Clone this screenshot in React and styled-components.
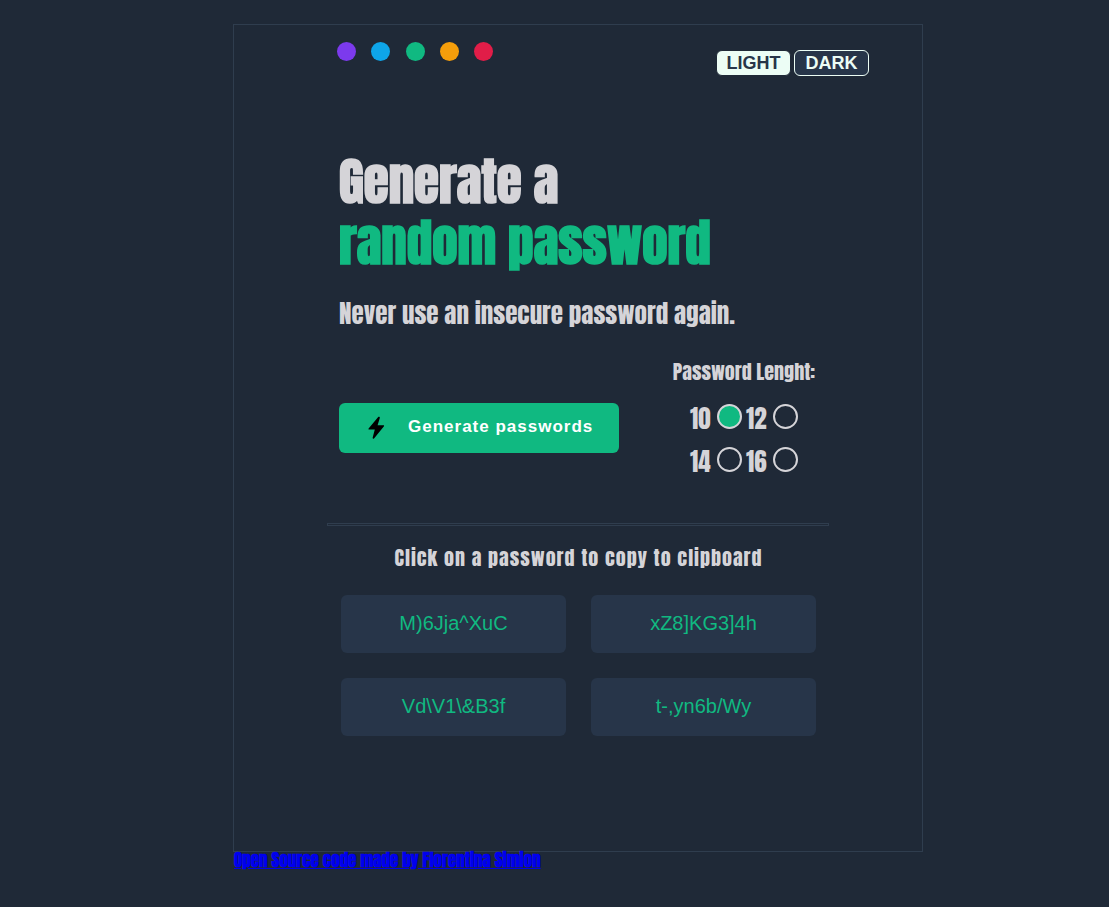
import React, { useState } from "react";
import styled, { createGlobalStyle } from "styled-components";

const display = `Anton, Impact, "Liberation Sans", sans-serif`;
const body = `"Liberation Sans", Arial, sans-serif`;

const GlobalStyle = createGlobalStyle`
  * { box-sizing: border-box; }
  body {
    margin: 0;
    background: #1f2937;
    color: #d5d4d8;
    font-family: ${display};
  }
`;

const Page = styled.div`
  padding: 24px 186px 36px 233px;
`;

const Card = styled.main`
  min-height: 828px;
  padding: 0 93px;
  border: 1px solid #2f3d4e;
`;

const TopBar = styled.header`
  display: flex;
  justify-content: space-between;
  align-items: flex-start;
  margin-right: -40px;
  padding: 17px 0 0 10px;
`;

const Swatches = styled.div`
  display: flex;
  justify-content: space-between;
  width: 156px;
`;

const Swatch = styled.button`
  width: 19px;
  height: 19px;
  padding: 0;
  border: 0;
  border-radius: 50%;
  background: ${(p) => p.$color};
`;

const Modes = styled.div`
  display: flex;
  gap: 3px;
  padding-top: 8px;
`;

const ModeButton = styled.button`
  width: 75px;
  height: 26px;
  padding: 0;
  border: 1px solid ${(p) => (p.$light ? "#1f2937" : "#ecfdf5")};
  border-radius: 6px;
  background: ${(p) => (p.$light ? "#ecfdf5" : "#273549")};
  color: ${(p) => (p.$light ? "#273549" : "#ecfdf5")};
  font: 700 18px/24px ${body};
`;

const Intro = styled.section`
  padding: 75px 12px 0;
`;

const Title = styled.h1`
  margin: 0;
  font-size: 51px;
  font-weight: 700;
  line-height: 61px;
  white-space: nowrap;
`;

const Accent = styled.span`
  display: block;
  color: #10b981;
`;

const Tagline = styled.p`
  margin: 25px 0 0;
  font-size: 25px;
  font-weight: 400;
  line-height: 32px;
  white-space: nowrap;
`;

const Controls = styled.section`
  display: flex;
  justify-content: space-between;
  align-items: flex-start;
  padding: 29px 12px 0;
`;

const GenerateButton = styled.button`
  display: flex;
  align-items: center;
  gap: 20px;
  width: 280px;
  height: 50px;
  margin-top: 44px;
  padding: 0 25px;
  border: 0;
  border-radius: 6px;
  background: #10b981;
  color: #fff;
  font: 700 17px/20px ${body};
  letter-spacing: 1px;
  white-space: nowrap;

  span { padding-bottom: 2px; }
`;

const LengthGroup = styled.fieldset`
  width: 146px;
  margin: 0;
  padding: 0;
  border: 0;
`;

const Legend = styled.legend`
  width: 100%;
  padding: 0;
  font-size: 20px;
  font-weight: 400;
  line-height: 26px;
  text-align: center;
  white-space: nowrap;
`;

const Options = styled.div`
  display: grid;
  grid-template-columns: repeat(2, 52px);
  justify-content: center;
  gap: 15px 4px;
  padding-top: 19px;
`;

const Option = styled.label`
  display: flex;
  justify-content: space-between;
  align-items: center;
  height: 28px;
  font-size: 25px;
  font-weight: 400;
`;

const Radio = styled.input`
  flex: none;
  appearance: none;
  width: 25px;
  height: 25px;
  margin: 0 0 3px;
  border: 2px solid #d5d4d8;
  border-radius: 50%;

  &:checked { background: #10b981; }
`;

const Divider = styled.hr`
  height: 3px;
  margin: 48px 0 0;
  border: 1px solid #2f3d4e;
`;

const Results = styled.section`
  padding: 19px 13px 0 14px;
`;

const Hint = styled.h2`
  margin: 0 0 24px;
  font-size: 20px;
  font-weight: 400;
  line-height: 26px;
  letter-spacing: 1px;
  text-align: center;
  white-space: nowrap;
`;

const PasswordGrid = styled.div`
  display: grid;
  grid-template-columns: 1fr 1fr;
  gap: 25px;
`;

const Password = styled.button`
  height: 58px;
  padding: 0 0 2px;
  border: 0;
  border-radius: 6px;
  background: #273549;
  color: #10b981;
  font: 400 20px/24px ${body};
`;

const Credit = styled.a`
  display: block;
  width: fit-content;
  padding-left: 1px;
  color: #0000ee;
  font-size: 17px;
  font-weight: 700;
  line-height: 16px;
`;

const colors = [
  ["Violet", "#7c3aed"],
  ["Blue", "#0ea5e9"],
  ["Green", "#10b981"],
  ["Orange", "#f59e0b"],
  ["Red", "#e11d48"],
];
const passwords = ["M)6Jja^XuC", "xZ8]KG3]4h", "Vd\\V1\\&B3f", "t-,yn6b/Wy"];

function Bolt() {
  return (
    <svg width="24" height="24" viewBox="0 0 24 24" aria-hidden="true">
      <path
        d="M14.2 1.1 4.8 12.2c-.6.7-.4 1.3.4 1.3h5.6L8.7 21.6c-.3 1.1.6 1.5 1.3.8l9.8-12c.5-.7.3-1.2-.5-1.2h-5.7l2.2-7.2c.3-1.1-.9-1.7-1.6-.9z"
        fill="#000"
      />
    </svg>
  );
}

export default function App() {
  const [length, setLength] = useState(10);
  return (
    <>
      <GlobalStyle />
      <Page>
        <Card>
          <TopBar>
            <Swatches>
              {colors.map(([name, color]) => (
                <Swatch key={name} type="button" aria-label={name} $color={color} />
              ))}
            </Swatches>
            <Modes>
              <ModeButton type="button" $light>LIGHT</ModeButton>
              <ModeButton type="button">DARK</ModeButton>
            </Modes>
          </TopBar>
          <Intro>
            <Title>
              Generate a <Accent>random password</Accent>
            </Title>
            <Tagline>Never use an insecure password again.</Tagline>
          </Intro>
          <Controls>
            <GenerateButton type="button">
              <Bolt />
              <span>Generate passwords</span>
            </GenerateButton>
            <LengthGroup>
              <Legend>Password Lenght:</Legend>
              <Options>
                {[10, 12, 14, 16].map((n) => (
                  <Option key={n}>
                    {n}
                    <Radio
                      type="radio"
                      name="length"
                      value={n}
                      checked={length === n}
                      onChange={() => setLength(n)}
                    />
                  </Option>
                ))}
              </Options>
            </LengthGroup>
          </Controls>
          <Divider />
          <Results>
            <Hint>Click on a password to copy to clipboard</Hint>
            <PasswordGrid>
              {passwords.map((p) => (
                <Password key={p} type="button">{p}</Password>
              ))}
            </PasswordGrid>
          </Results>
        </Card>
        <Credit href="#source">Open Source code made by Florentina Simion</Credit>
      </Page>
    </>
  );
}
